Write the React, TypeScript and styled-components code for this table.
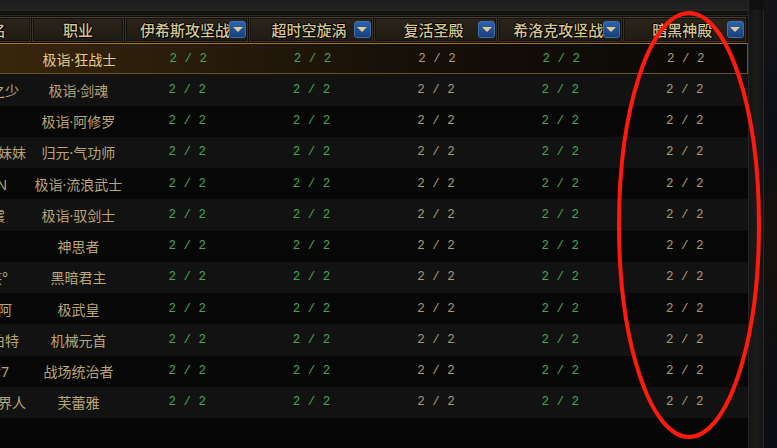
import React from "react";
import styled, { createGlobalStyle } from "styled-components";

const GlobalStyle = createGlobalStyle`
  html, body {
    margin: 0;
    padding: 0;
    background: #050505;
    overflow: hidden;
  }
`;

type Trow = {
  name: string;
  job: string;
};

const rows: Array<Trow> = [
  { name: "风守", job: "极诣·狂战士" },
  { name: "无敌の之少", job: "极诣·剑魂" },
  { name: "月下", job: "极诣·阿修罗" },
  { name: "可爱の小妹妹", job: "归元·气功师" },
  { name: "丶TIAN", job: "极诣·流浪武士" },
  { name: "雷霆震", job: "极诣·驭剑士" },
  { name: "一叶", job: "神思者" },
  { name: "浅浅笑°", job: "黑暗君主" },
  { name: "我是小阿", job: "极武皇" },
  { name: "西格尔伯特", job: "机械元首" },
  { name: "小七七7", job: "战场统治者" },
  { name: "来自异世界人", job: "芙蕾雅" },
];

const dungeons = [
  { title: "伊希斯攻坚战", green: true },
  { title: "超时空旋涡", green: true },
  { title: "复活圣殿", green: false },
  { title: "希洛克攻坚战", green: true },
  { title: "暗黑神殿", green: false },
];

const COLS = "96px 93px repeat(5, 124.4px)";
const FONT = `"Noto Sans", "Noto Sans CJK SC", sans-serif`;

const Screen = styled.div`
  position: relative;
  width: 777px;
  height: 448px;
  display: flex;
  overflow: hidden;
  background: #050505;
  font-family: ${FONT};
`;

const Main = styled.div`
  width: 748px;
  display: flex;
  flex-direction: column;
  overflow: hidden;
`;

const TopStrip = styled.div`
  height: 15px;
  flex-shrink: 0;
  background: linear-gradient(#1c1c1c 0%, #202020 60%, #2c2c2a 68%, #141414 75%, #0e0e0e 100%);
`;

// the view is scrolled sideways, the name column is mostly cut off
const Table = styled.div`
  margin-left: -64px;
  display: flex;
  flex-direction: column;
`;

const HeaderRow = styled.div`
  display: grid;
  grid-template-columns: ${COLS};
  height: 27px;
  background: #0f0d0a;
  border-top: 1px solid #2e2a22;
`;

const HeaderCell = styled.div`
  display: flex;
  align-items: center;
  margin: 1px 1px 1px 0;
  border: 1px solid #3a3226;
  border-top-color: #4a4032;
  background: linear-gradient(#2c251c, #1f1a13);
  box-shadow: inset 0 0 0 1px #15110c;
`;

const HeaderText = styled.span<{ $pad?: number }>`
  flex: 1;
  text-align: center;
  padding-left: ${(p) => p.$pad ?? 0}px;
  white-space: nowrap;
  overflow: hidden;
  font-size: 15px;
  font-weight: 500;
  color: #d8c58e;
  text-shadow: 1px 1px 0 #000, -1px 0 0 #000, 0 -1px 0 #000, 1px 0 0 #000;
`;

const DropButton = styled.div`
  width: 17px;
  height: 17px;
  margin-right: 1px;
  flex-shrink: 0;
  border-radius: 3px;
  border: 1px solid #3f6fae;
  background: linear-gradient(#2a62ac, #173f7a);
  box-sizing: border-box;
  display: flex;
  align-items: center;
  justify-content: center;
  &::after {
    content: "";
    width: 0;
    height: 0;
    border-left: 5px solid transparent;
    border-right: 5px solid transparent;
    border-top: 5px solid #e2c892;
  }
`;

const Row = styled.div<{ $light?: boolean; $selected?: boolean }>`
  display: grid;
  grid-template-columns: ${COLS};
  height: 31.25px;
  box-sizing: border-box;
  align-items: center;
  background: ${(p) =>
    p.$selected
      ? "linear-gradient(90deg, #3e2a0c 0%, #2c1e0a 25%, #150f07 60%, #0a0805 100%)"
      : p.$light
      ? "#121212"
      : "#070707"};
  border: ${(p) => (p.$selected ? "1px solid #6e5020" : "none")};
  border-top-color: ${(p) => (p.$selected ? "#a27326" : "transparent")};
`;

const NameCell = styled.div<{ $selected?: boolean }>`
  text-align: center;
  white-space: nowrap;
  font-size: 14px;
  color: ${(p) => (p.$selected ? "#e0cb92" : "#b9a577")};
`;

const JobCell = styled(NameCell)``;

const Score = styled.div<{ $green: boolean }>`
  text-align: center;
  font-family: "Liberation Mono", "DejaVu Sans Mono", monospace;
  font-size: 12.5px;
  color: ${(p) => (p.$green ? "#48a454" : "#aa9a78")};
`;

const Filler = styled.div`
  flex: 1;
  background: #060606;
`;

const RightRail = styled.div`
  flex: 1;
  display: flex;
  border-left: 1px solid #262626;
  background: #101010;
`;

const Track = styled.div`
  width: 14px;
  margin-top: 10px;
  background: linear-gradient(90deg, #151515, #1b1b1b 60%, #121212);
  border-right: 1px solid #2a2a2a;
`;

const Backdrop = styled.div`
  flex: 1;
  background: linear-gradient(#141418 0%, #0c0e14 30%, #15110e 50%, #0a0c12 100%);
`;

const Annotation = styled.svg`
  position: absolute;
  left: 0;
  top: 0;
  pointer-events: none;
`;

export default function App() {
  return (
    <>
      <GlobalStyle />
      <Screen>
        <Main>
          <TopStrip />
          <Table>
            <HeaderRow>
              <HeaderCell>
                <HeaderText>角色名</HeaderText>
              </HeaderCell>
              <HeaderCell>
                <HeaderText>职业</HeaderText>
              </HeaderCell>
              {dungeons.map((d, idx) => (
                <HeaderCell key={idx}>
                  <HeaderText $pad={14}>{d.title}</HeaderText>
                  <DropButton />
                </HeaderCell>
              ))}
            </HeaderRow>
            {rows.map((r, idx) => (
              <Row key={idx} $light={idx % 2 === 1} $selected={idx === 0}>
                <NameCell $selected={idx === 0}>{r.name}</NameCell>
                <JobCell $selected={idx === 0}>{r.job}</JobCell>
                {dungeons.map((d, j) => (
                  <Score key={j} $green={d.green}>
                    2 / 2
                  </Score>
                ))}
              </Row>
            ))}
          </Table>
          <Filler />
        </Main>
        <RightRail>
          <Track />
          <Backdrop />
        </RightRail>
        <Annotation width="777" height="448" viewBox="0 0 777 448">
          <ellipse cx="689" cy="225" rx="70" ry="212" fill="none" stroke="#ff1a0e" strokeWidth="4" />
        </Annotation>
      </Screen>
    </>
  );
}
